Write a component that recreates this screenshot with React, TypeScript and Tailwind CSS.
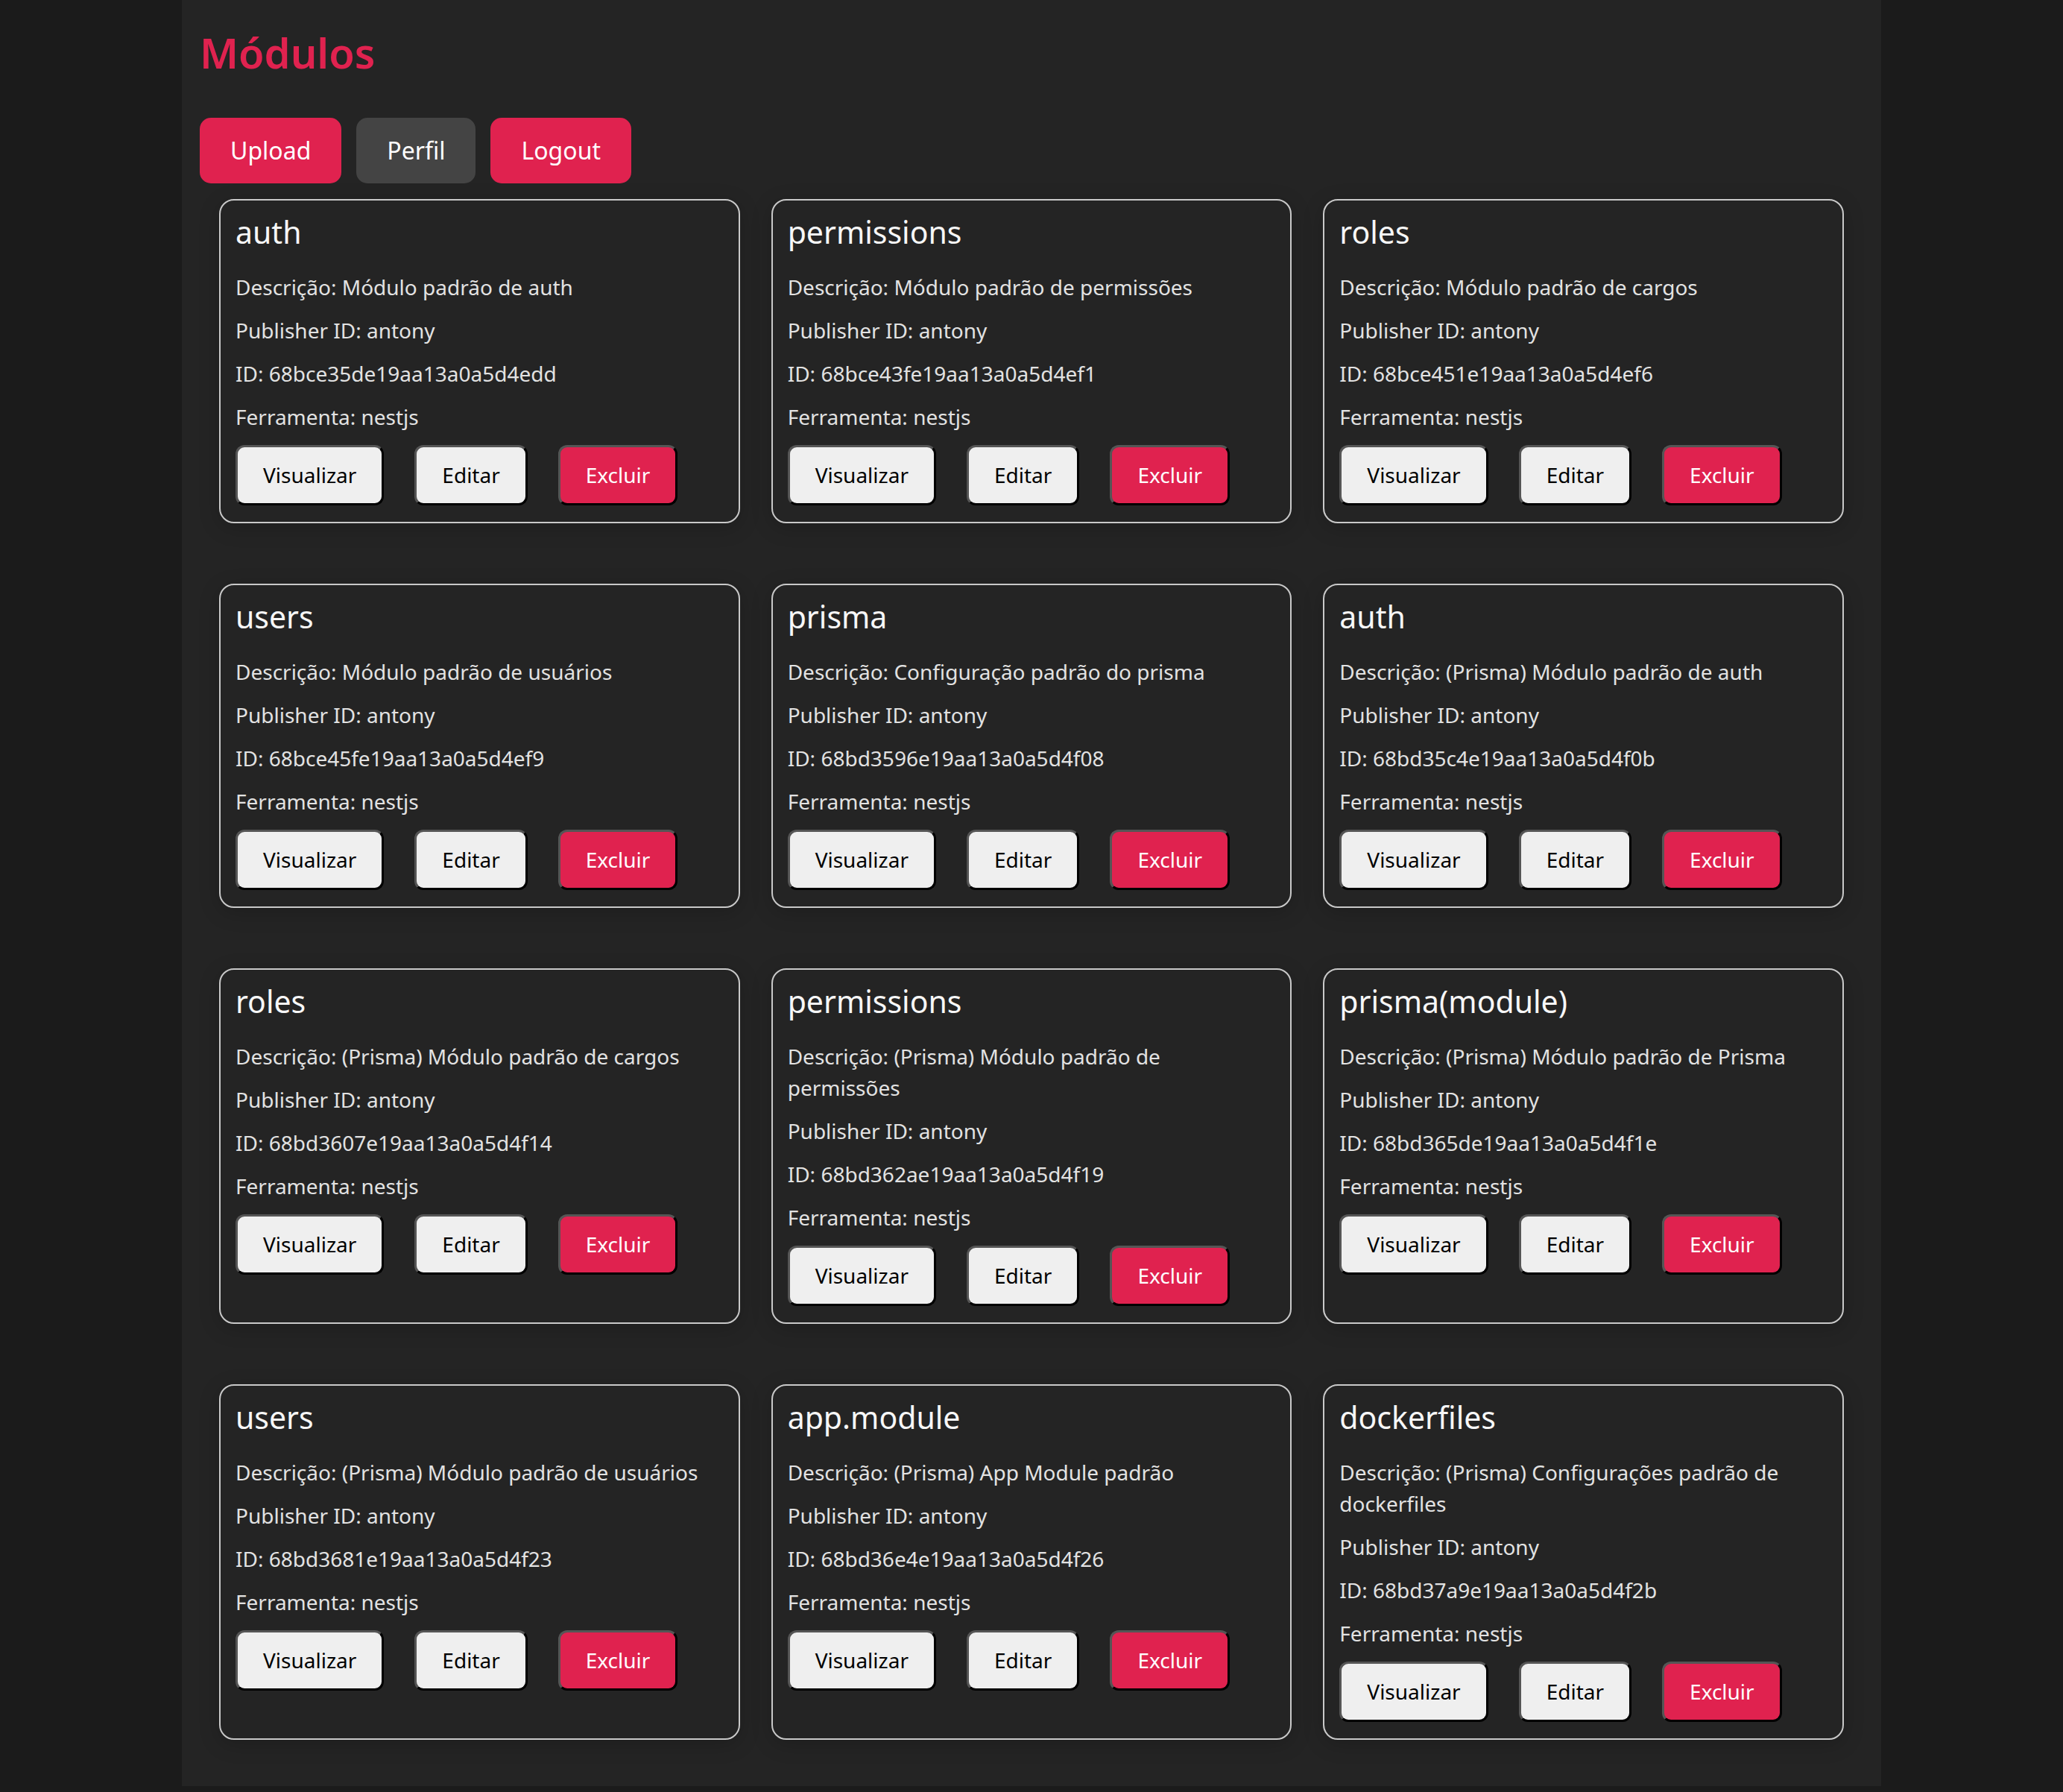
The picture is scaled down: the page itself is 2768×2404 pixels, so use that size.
interface Module {
  name: string;
  description: string;
  publisher: string;
  id: string;
  tool: string;
}

const modules: Module[] = [
  { name: 'auth', description: 'Módulo padrão de auth', publisher: 'antony', id: '68bce35de19aa13a0a5d4edd', tool: 'nestjs' },
  { name: 'permissions', description: 'Módulo padrão de permissões', publisher: 'antony', id: '68bce43fe19aa13a0a5d4ef1', tool: 'nestjs' },
  { name: 'roles', description: 'Módulo padrão de cargos', publisher: 'antony', id: '68bce451e19aa13a0a5d4ef6', tool: 'nestjs' },
  { name: 'users', description: 'Módulo padrão de usuários', publisher: 'antony', id: '68bce45fe19aa13a0a5d4ef9', tool: 'nestjs' },
  { name: 'prisma', description: 'Configuração padrão do prisma', publisher: 'antony', id: '68bd3596e19aa13a0a5d4f08', tool: 'nestjs' },
  { name: 'auth', description: '(Prisma) Módulo padrão de auth', publisher: 'antony', id: '68bd35c4e19aa13a0a5d4f0b', tool: 'nestjs' },
  { name: 'roles', description: '(Prisma) Módulo padrão de cargos', publisher: 'antony', id: '68bd3607e19aa13a0a5d4f14', tool: 'nestjs' },
  { name: 'permissions', description: '(Prisma) Módulo padrão de permissões', publisher: 'antony', id: '68bd362ae19aa13a0a5d4f19', tool: 'nestjs' },
  { name: 'prisma(module)', description: '(Prisma) Módulo padrão de Prisma', publisher: 'antony', id: '68bd365de19aa13a0a5d4f1e', tool: 'nestjs' },
  { name: 'users', description: '(Prisma) Módulo padrão de usuários', publisher: 'antony', id: '68bd3681e19aa13a0a5d4f23', tool: 'nestjs' },
  { name: 'app.module', description: '(Prisma) App Module padrão', publisher: 'antony', id: '68bd36e4e19aa13a0a5d4f26', tool: 'nestjs' },
  { name: 'dockerfiles', description: '(Prisma) Configurações padrão de dockerfiles', publisher: 'antony', id: '68bd37a9e19aa13a0a5d4f2b', tool: 'nestjs' },
];

const cardButton =
  'rounded-[12px] border-[3px] border-t-[#555555] border-l-[#555555] border-b-black border-r-black px-[34px] py-[18px] text-[28px] leading-[39px]';

const headerButton =
  'rounded-[15px] px-[41px] py-[22px] text-[32px] leading-[44px] text-white';

/** One module card with its actions. */
const ModuleCard = ({ module }: { module: Module }) => (
  <div className="flex flex-col rounded-[20px] border-2 border-[#c9c9c9] bg-[#242424] px-[20px] pt-[20px] pb-[22px] shadow-[0_6px_28px_rgba(0,0,0,0.18)]">
    <h2 className="text-[41px] leading-[44px] text-[#f7f7f7]">{module.name}</h2>
    <div className="mt-[31px] flex flex-col gap-[16px] text-[28px] leading-[42px] text-[#e2e2e2]">
      <p>Descrição: {module.description}</p>
      <p>Publisher ID: {module.publisher}</p>
      <p>ID: {module.id}</p>
      <p>Ferramenta: {module.tool}</p>
    </div>
    <div className="mt-[17px] flex gap-[41px]">
      <button type="button" className={`${cardButton} bg-[#efefef] text-black`}>
        Visualizar
      </button>
      <button type="button" className={`${cardButton} bg-[#efefef] text-black`}>
        Editar
      </button>
      <button type="button" className={`${cardButton} bg-[#e0224f] text-white`}>
        Excluir
      </button>
    </div>
  </div>
);

const App = () => (
  <div className="min-h-screen bg-[#1b1b1b] font-['Noto_Sans',sans-serif]">
    <div className="mx-auto w-[2280px] bg-[#242424] px-[24px] pt-[32px] pb-[62px]">
      <h1 className="text-[56px] leading-[76px] font-semibold text-[#e0224f]">Módulos</h1>
      <div className="mt-[50px] flex gap-[20px]">
        <button type="button" className={`${headerButton} bg-[#e0224f]`}>
          Upload
        </button>
        <button type="button" className={`${headerButton} bg-[#444444]`}>
          Perfil
        </button>
        <button type="button" className={`${headerButton} bg-[#e0224f]`}>
          Logout
        </button>
      </div>
      <div className="mt-[21px] grid grid-cols-3 gap-x-[42px] gap-y-[81px] px-[26px]">
        {modules.map((module) => (
          <ModuleCard key={module.id} module={module} />
        ))}
      </div>
    </div>
  </div>
);

export default App;
